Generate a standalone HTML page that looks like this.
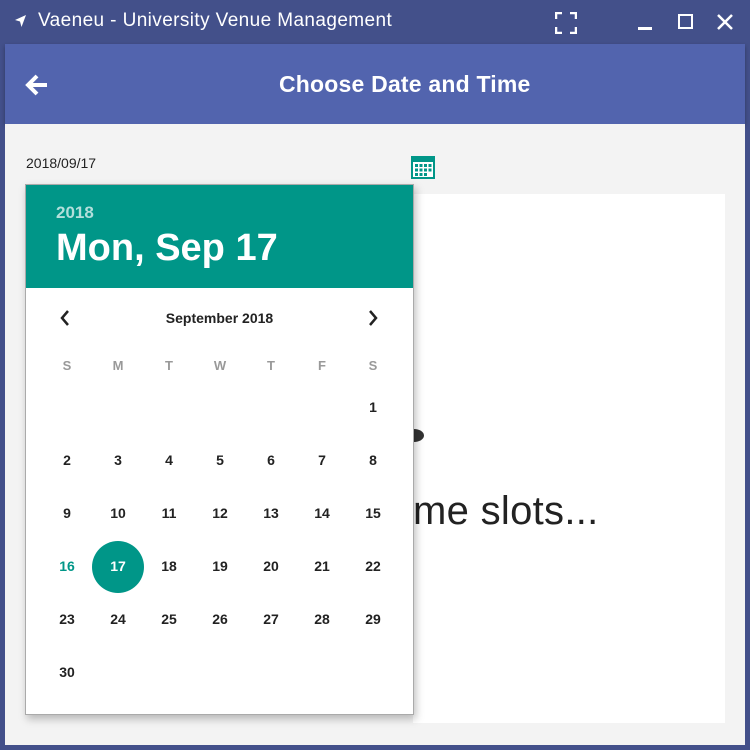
<!DOCTYPE html>
<html><head><style>
*{margin:0;padding:0;box-sizing:border-box}
body{width:750px;height:750px;background:#43508a;position:relative;overflow:hidden;font-family:"Liberation Sans",sans-serif}
.abs{position:absolute}
.title{left:38px;top:10px;color:#fff;font-size:19px;letter-spacing:.4px}
.app{left:5px;top:44px;width:740px;height:80px;background:#5264ae;box-shadow:0 2px 4px rgba(0,0,0,.3)}
.content{left:5px;top:124px;width:740px;height:621px;background:#f3f3f3}
.panel{left:413px;top:194px;width:312px;height:529px;background:#fff}
.pop{left:25px;top:184px;width:389px;height:531px;background:#fff;border:1px solid #aaa;box-shadow:2px 4px 8px rgba(0,0,0,.25)}
.hdr{left:0;top:0;width:387px;height:103px;background:#009688}
.d{position:absolute;width:40px;margin-left:-20px;text-align:center;font-size:14px;font-weight:bold;color:#222}
.n{position:absolute;width:40px;margin-left:-20px;text-align:center;font-size:13px;font-weight:bold;color:#999}
</style></head><body>
<svg class="abs" style="left:14px;top:14px" width="14" height="14"><path d="M12 1L1 6l5 1.5L7.5 13z" fill="#fff"/></svg>
<div class="abs title">Vaeneu - University Venue Management</div>
<svg class="abs" style="left:555px;top:12px" width="22" height="22" fill="none" stroke="#fff" stroke-width="2.5"><path d="M1 7V1h6M15 1h6v6M21 15v6h-6M7 21H1v-6"/></svg>
<div class="abs" style="left:638px;top:27px;width:14px;height:2.5px;background:#fff"></div>
<div class="abs" style="left:678px;top:14px;width:15px;height:15px;border:2.5px solid #fff"></div>
<svg class="abs" style="left:717px;top:14px" width="16" height="16" stroke="#fff" stroke-width="2.5"><path d="M1 1L15 15M15 1L1 15"/></svg>
<div class="abs app">
<svg class="abs" style="left:20px;top:30px" width="24" height="22" fill="none" stroke="#fff" stroke-width="4"><path d="M12 2L3 11l9 9M3 11h19"/></svg>
<div class="abs" style="left:274px;top:27px;color:#fff;font-size:23px;font-weight:bold;letter-spacing:.2px">Choose Date and Time</div>
</div>
<div class="abs content"></div>
<div class="abs panel"></div>
<div class="abs" style="left:404px;top:429px;width:20px;height:13px;border-radius:50%;background:#333"></div>
<div class="abs" style="left:413px;top:489px;font-size:40px;color:#222;letter-spacing:.3px">me slots...</div>
<div class="abs" style="left:26px;top:155px;font-size:14px;color:#222">2018/09/17</div>
<svg class="abs" style="left:410px;top:153px" width="26" height="27"><rect x="1" y="3" width="24" height="23" fill="#009688"/><rect x="3" y="9" width="20" height="15" fill="#fff"/><g fill="#009688"><rect x="5" y="11" width="3" height="3"/><rect x="9.5" y="11" width="3" height="3"/><rect x="14" y="11" width="3" height="3"/><rect x="18.5" y="11" width="3" height="3"/><rect x="5" y="15.5" width="3" height="3"/><rect x="9.5" y="15.5" width="3" height="3"/><rect x="14" y="15.5" width="3" height="3"/><rect x="18.5" y="15.5" width="3" height="3"/><rect x="5" y="20" width="3" height="3"/><rect x="9.5" y="20" width="3" height="3"/><rect x="14" y="20" width="3" height="3"/></g></svg>
<div class="abs pop">
<div class="abs hdr">
<div class="abs" style="left:30px;top:18px;color:#b2dfdb;font-size:17px;font-weight:bold">2018</div>
<div class="abs" style="left:30px;top:42px;color:#fff;font-size:38px;font-weight:bold">Mon, Sep 17</div>
</div>
<svg class="abs" style="left:34px;top:125px" width="10" height="16" fill="none" stroke="#222" stroke-width="2.5"><path d="M8 1L2 8l6 7"/></svg>
<svg class="abs" style="left:342px;top:125px" width="10" height="16" fill="none" stroke="#222" stroke-width="2.5"><path d="M2 1l6 7-6 7"/></svg>
<div class="abs" style="left:0;width:387px;top:125px;text-align:center;font-size:14px;font-weight:bold;color:#222">September 2018</div>
<div class="abs" style="left:66px;top:516px;width:52px;height:52px;margin-top:-160px;border-radius:50%;background:#009688"></div>
<div id="g"></div>
</div>
<script>
var g=document.getElementById('g'),h='';
var xs=[41,92,143,194,245,296,347];
'SMTWTFS'.split('').forEach(function(c,i){h+='<div class="n" style="left:'+xs[i]+'px;top:173px">'+c+'</div>'});
for(var d=1;d<=30;d++){var p=d+5,c=p%7,r=Math.floor(p/7);var col=d==16?'color:#009688;':d==17?'color:#fff;':'';h+='<div class="d" style="left:'+xs[c]+'px;top:'+(214+r*53)+'px;'+col+'">'+d+'</div>'}
g.innerHTML=h;
</script>
</body></html>
